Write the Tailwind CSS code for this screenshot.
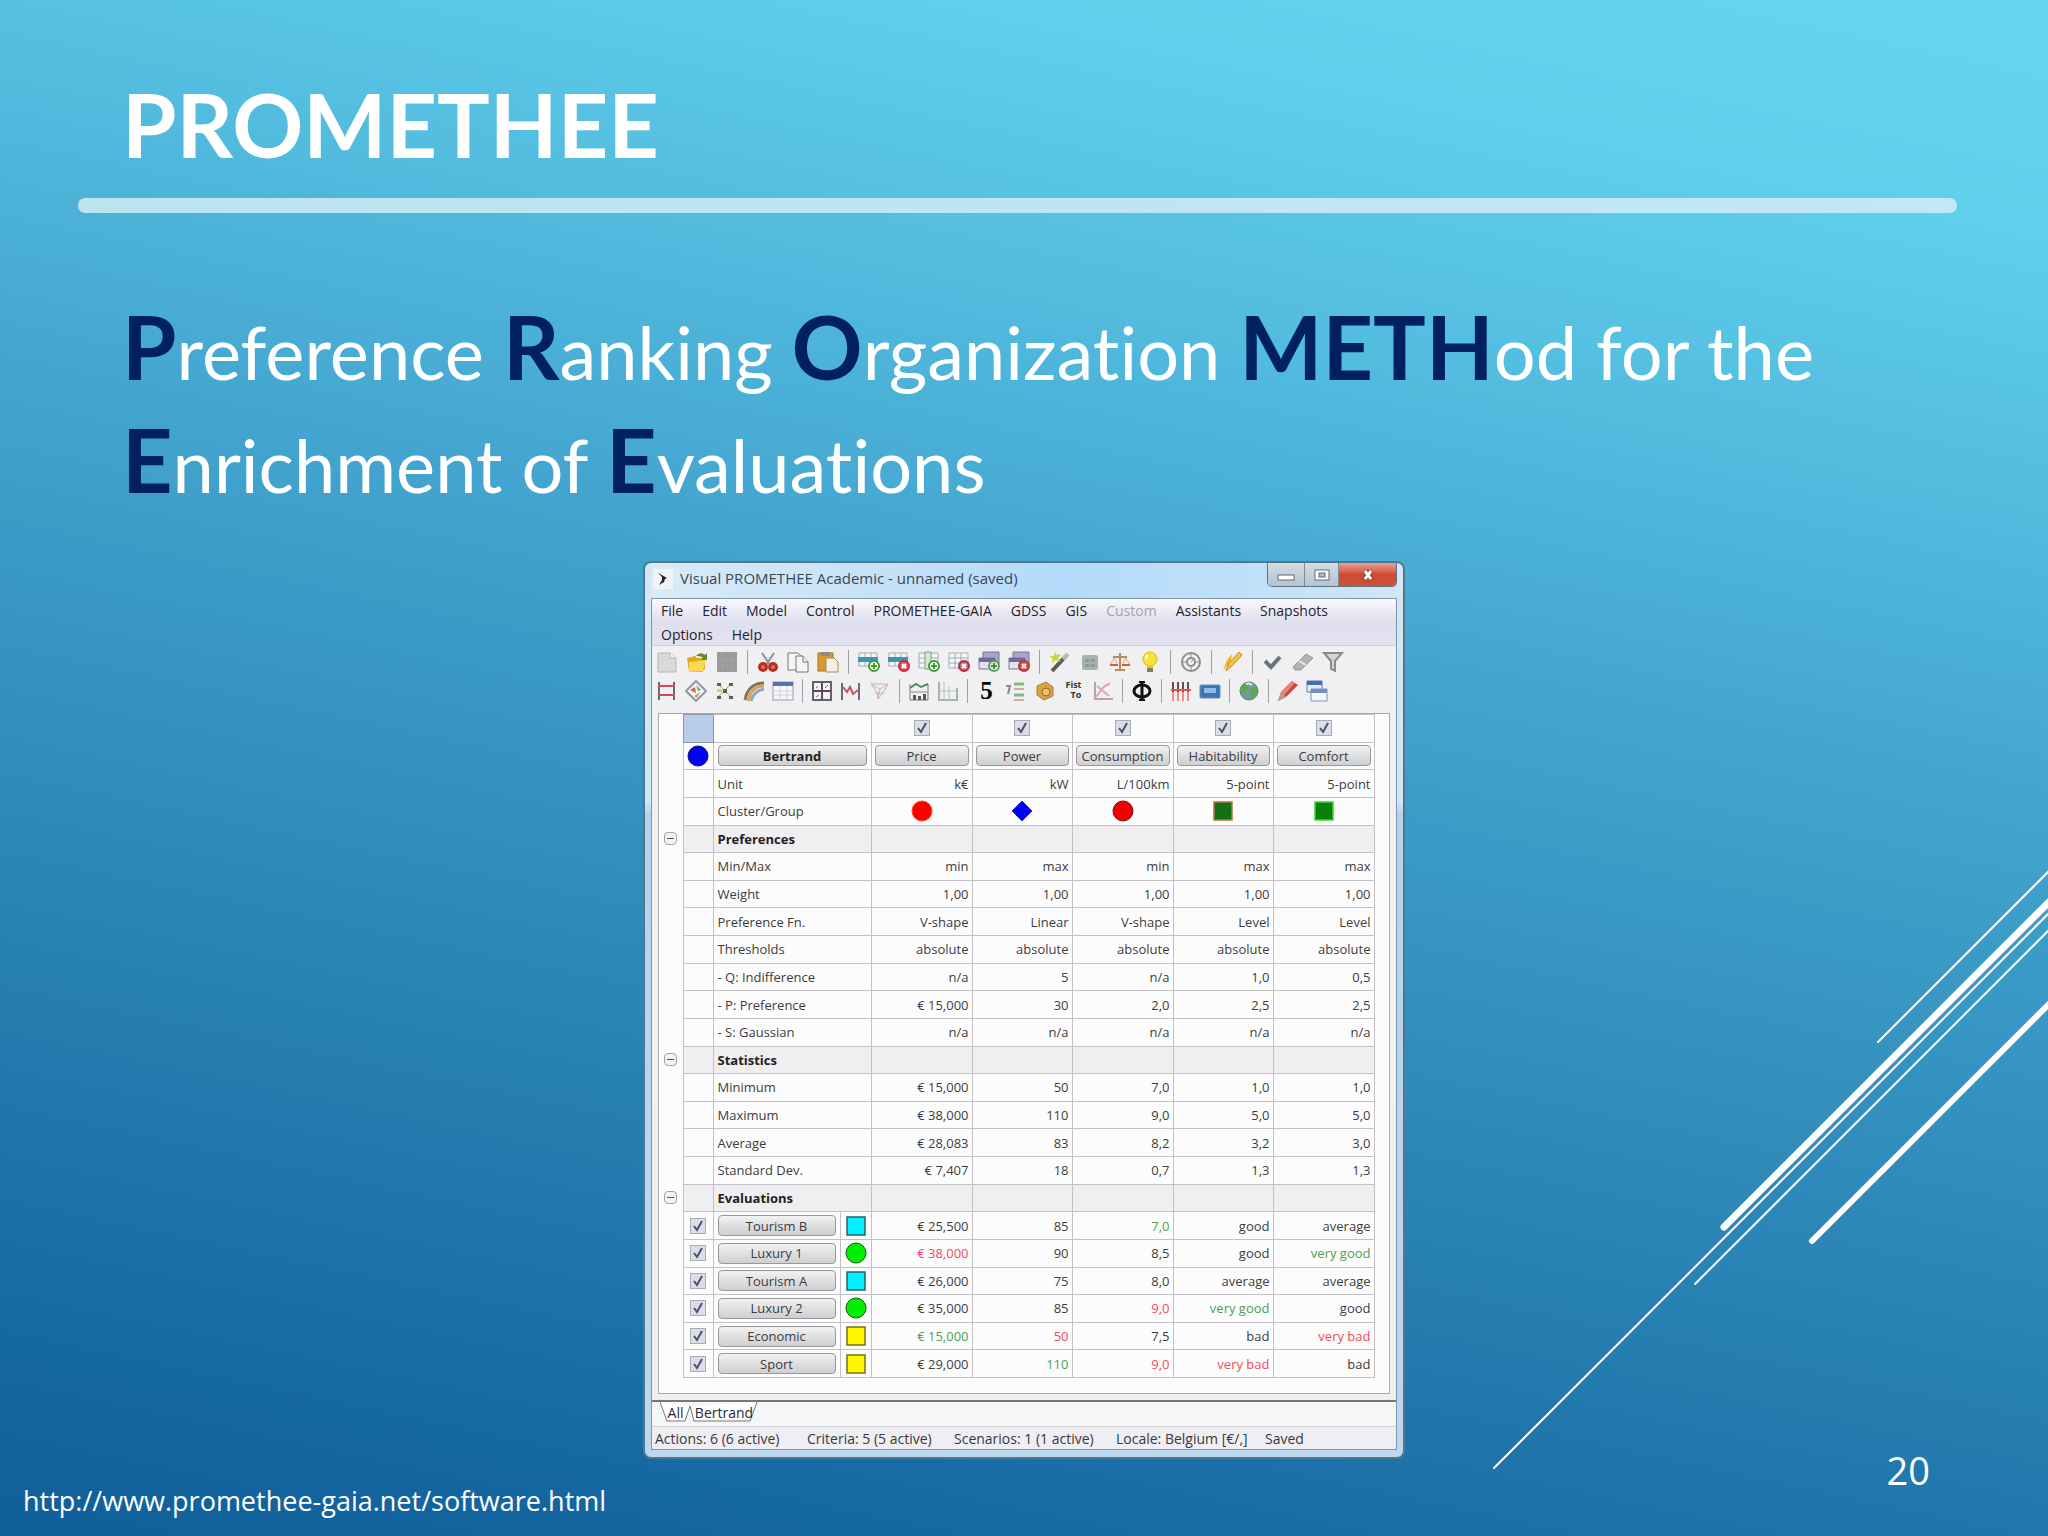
<!DOCTYPE html>
<html lang="en">
<head>
    <meta charset="UTF-8">
    <meta name="viewport" content="width=device-width, initial-scale=1.0">
    <title>PROMETHEE</title>
    <script src="https://cdn.jsdelivr.net/npm/@tailwindcss/browser@4"></script>
</head>
<body class="relative min-h-screen overflow-x-hidden bg-[linear-gradient(192deg,#66d6f0_0%,#60cfeb_12%,#52bbde_26%,#44a6d0_40%,#3492c0_56%,#2279ad_76%,#1668a2_90%,#0f5f99_100%)] text-white font-['Lato',sans-serif]">

    <!-- Diagonal strokes -->
    <svg class="absolute right-0 top-[866px] w-[560px] h-[610px]" viewBox="1488 866 560 610" fill="none" stroke="#fff" stroke-linecap="round" aria-hidden="true">
        <path d="M1878 1042L2050 870M1494 1468L2050 912M1695 1284L2050 929" stroke-width="2"/>
        <path d="M1724 1227L2050 901" stroke-width="7"/>
        <path d="M1812 1241L2050 1003" stroke-width="6"/>
    </svg>

    <div class="flex min-h-screen flex-col">
        <!-- Header -->
        <header class="pt-[80px]">
            <h1 class="px-[122px] text-[88px] leading-none font-bold">PROMETHEE</h1>
            <div class="mt-[30px] ml-[78px] mr-[91px] h-[15px] rounded-[7px] bg-[#d9eef6]/80"></div>
        </header>

        <main class="px-[122px]">
            <p class="mt-[82px] text-[74px] leading-[113px] [font-variant-ligatures:none] [&>b]:text-[88px] [&>b]:leading-none [&>b]:font-bold [&>b]:text-[#00205f]"><b>P</b>reference <b>R</b>anking <b>O</b>rganization <b>METH</b>od for the <b>E</b>nrichment of <b>E</b>valuations</p>

            <!-- Application window -->
            <section class="mx-auto mt-10 w-full max-w-[762px] rounded-lg border-2 border-[#4f7890] bg-[linear-gradient(180deg,#d3e7f4_0,#cfe6f5_240px,#b3d3ee_250px,#bcd8ee_100%)] px-[6px] pb-[7px] font-['Open_Sans',sans-serif] text-[#2a2a35]">
                <div class="flex h-[35px] items-start justify-between bg-[linear-gradient(90deg,#d9ebf6_0%,#c3e0f7_35%,#b3dafa_55%,#c0e0f8_80%,#cfe6f5_100%)]">
                    <div class="flex h-[31px] items-center gap-[7px] pl-[2px] text-[15px] text-[#3a4654]">
                        <svg class="size-5" viewBox="0 0 20 20" fill="#222"><rect width="20" height="20" fill="#eef4f8"/><path d="M5 4l9 5-2 1-1 3-5 3 3-5 0-3z"/></svg>
                        <span>Visual PROMETHEE Academic - unnamed (saved)</span>
                    </div>
                    <div class="flex h-[24px] w-[130px] overflow-hidden rounded-b-[5px] border border-t-0 border-[#5f7282]">
                        <button aria-label="Minimize" class="flex w-[37px] items-center justify-center border-r border-[#7c8c99] bg-linear-to-b from-[#d5dde4] to-[#b4c3d0]"><svg class="w-[18px] h-4" viewBox="0 0 18 16"><rect x="1" y="8" width="16" height="5" fill="#fff" stroke="#5d6b78"/></svg></button>
                        <button aria-label="Maximize" class="flex w-[34px] items-center justify-center border-r border-[#7c8c99] bg-linear-to-b from-[#d5dde4] to-[#b4c3d0]"><svg class="w-[18px] h-4" viewBox="0 0 18 16"><rect x="2" y="3" width="14" height="10" fill="#fff" stroke="#5d6b78"/><rect x="6" y="6" width="6" height="4" fill="#aebccb" stroke="#5d6b78"/></svg></button>
                        <button aria-label="Close" class="flex flex-1 items-center justify-center bg-linear-to-b from-[#e3a294] via-[#cf4a33] to-[#c8523c]"><svg class="size-4" viewBox="0 0 16 16"><path d="M5 4l6 8M11 4l-6 8" stroke="#6d3a34" stroke-width="5"/><path d="M5 4l6 8M11 4l-6 8" stroke="#fff" stroke-width="3"/></svg></button>
                    </div>
                </div>

                <div class="border border-[#7f97a8] bg-[#f0eff2]">
                    <!-- Menu -->
                    <nav class="flex h-[47px] flex-wrap content-start gap-x-[19px] border-b border-[#cfcfdb] bg-linear-to-b from-[#f8f8fc] via-[#e0dfee] to-[#e3e2f0] px-[9px] text-[14px] leading-6 text-[#23232e]">
                        <a href="#">File</a>
                        <a href="#">Edit</a>
                        <a href="#">Model</a>
                        <a href="#">Control</a>
                        <a href="#">PROMETHEE-GAIA</a>
                        <a href="#">GDSS</a>
                        <a href="#">GIS</a>
                        <a href="#" class="text-[#a3a3ad]">Custom</a>
                        <a href="#">Assistants</a>
                        <a href="#" class="mr-[40px]">Snapshots</a>
                        <a href="#">Options</a>
                        <a href="#">Help</a>
                    </nav>

                    <!-- Toolbar, first row -->
                    <div class="flex h-[30px] items-center pt-[2px] [&>button]:flex [&>button]:w-[30px] [&>button]:shrink-0 [&>button]:justify-center [&>i]:flex [&>i]:w-[11px] [&>i]:justify-center [&>i]:before:h-6 [&>i]:before:w-px [&>i]:before:bg-[#a0a0a4] [&_svg]:size-[22px]">
                        <button aria-label="New"><svg viewBox="0 0 22 22"><path d="M2 2h12l6 5v14H2z" fill="#d9d9d9" stroke="#b5b5b5"/><path d="M14 2v5h6" fill="#f5f5f5" stroke="#b5b5b5"/></svg></button>
                        <button aria-label="Open"><svg viewBox="0 0 22 22"><path d="M1 7l8-2 2 2h8v11l-3 3H3z" fill="#e0a81e"/><path d="M3 11l17-2-3 11-14 1z" fill="#fbd84f"/><path d="M10 5c3-4 7-3 9-1l2-2v7h-6l2-2c-2-2-4-2-7-2z" fill="#5c8f2c"/></svg></button>
                        <button aria-label="Save"><svg viewBox="0 0 22 22"><rect x="1" y="1" width="20" height="20" fill="#9a9a9a"/><path d="M5 1v8h12V1M6 21v-7h10v7" fill="none" stroke="#a6a6a6"/></svg></button>
                        <i></i>
                        <button aria-label="Cut"><svg viewBox="0 0 22 22" fill="none"><path d="M5 2l8 12M17 2L9 14" stroke="#8b8f98" stroke-width="2"/><circle cx="6" cy="16" r="3.500" fill="#d9745c" stroke="#b8301c" stroke-width="3"/><circle cx="16" cy="16" r="3.500" fill="#d9745c" stroke="#b8301c" stroke-width="3"/></svg></button>
                        <button aria-label="Copy"><svg viewBox="0 0 22 22" fill="#f5f5f5" stroke="#777"><path d="M1 2h10l3 3v14H1z"/><path d="M9 5h7l5 6v10H9z"/><path d="M16 5v6h5"/></svg></button>
                        <button aria-label="Paste"><svg viewBox="0 0 22 22"><rect x="1" y="2" width="15" height="18" fill="#d79a35" stroke="#a77422"/><rect x="4" y="1" width="9" height="4" fill="#8d8d8d"/><path d="M9 7h8l4 4v10H9z" fill="#f3f0e8" stroke="#a88c58"/></svg></button>
                        <i></i>
                        <button aria-label="Add action"><svg viewBox="0 0 22 22"><path d="M1 2h18v13H1zM7 2v13M13 2v13" fill="#f2f6f9" stroke="#a2adb6"/><path d="M0 6h20v5H0z" fill="#3f94b4"/><circle cx="16" cy="15" r="5" fill="#fff" stroke="#3d9d35" stroke-width="2"/><path d="M16 12v6M13 15h6" stroke="#3d9d35" stroke-width="2"/></svg></button>
                        <button aria-label="Delete action"><svg viewBox="0 0 22 22"><path d="M1 2h18v13H1zM7 2v13M13 2v13" fill="#f2f6f9" stroke="#a2adb6"/><path d="M0 6h20v5H0z" fill="#3f94b4"/><circle cx="16" cy="15" r="5" fill="#d9606a" stroke="#c42b3c" stroke-width="2"/><path d="M14 13l4 4M18 13l-4 4" stroke="#fff" stroke-width="2"/></svg></button>
                        <button aria-label="Add criterion"><svg viewBox="0 0 22 22"><path d="M1 2h19v15H1zM1 7h19M1 12h19" fill="#f2f6f9" stroke="#a2adb6"/><path d="M7 1h6v17H7z" fill="#d2ead6" stroke="#6ca77a"/><circle cx="16" cy="15" r="5" fill="#fff" stroke="#3d9d35" stroke-width="2"/><path d="M16 12v6M13 15h6" stroke="#3d9d35" stroke-width="2"/></svg></button>
                        <button aria-label="Delete criterion"><svg viewBox="0 0 22 22"><path d="M1 2h19v15H1zM1 7h19M1 12h19M7 2v15M13 2v15" fill="#f6f6f6" stroke="#a2adb6"/><circle cx="16" cy="15" r="5" fill="#cc6a74" stroke="#b02f40" stroke-width="2"/><path d="M14 13l4 4M18 13l-4 4" stroke="#fff" stroke-width="2"/></svg></button>
                        <button aria-label="Add scenario"><svg viewBox="0 0 22 22"><path d="M5 1h16v12H5z" fill="#a9a6c6" stroke="#77759c"/><path d="M1 7h16v11H1z" fill="#e4e3ee" stroke="#77759c"/><path d="M1 7h16v4H1z" fill="#6f6c9d"/><circle cx="16" cy="15" r="5" fill="#dfeadf" stroke="#5c9e5b" stroke-width="2"/><path d="M16 12v6M13 15h6" stroke="#4a8a49" stroke-width="2"/></svg></button>
                        <button aria-label="Delete scenario"><svg viewBox="0 0 22 22"><path d="M5 1h16v12H5z" fill="#a9a6c6" stroke="#77759c"/><path d="M1 7h16v11H1z" fill="#e4e3ee" stroke="#77759c"/><path d="M1 7h16v4H1z" fill="#6f6c9d"/><circle cx="16" cy="15" r="5" fill="#d65a5a" stroke="#c03030" stroke-width="2"/><path d="M14 13l4 4M18 13l-4 4" stroke="#fff" stroke-width="2"/></svg></button>
                        <i></i>
                        <button aria-label="Wizard"><svg viewBox="0 0 22 22"><path d="M3 20L17 5" stroke="#5b5b52" stroke-width="4"/><path d="M14 8l5-5" stroke="#b9b9ad" stroke-width="4"/><path d="M6 0l1 4 5-1-3 4 3 4-5-2-4 3 1-4-4-3h5z" fill="#cfd13c"/></svg></button>
                        <button aria-label="Data"><svg viewBox="0 0 22 22"><rect x="3" y="4" width="16" height="15" rx="2" fill="#a9b0b0"/><path d="M6 8h4v3H6zM12 8h4v3h-4zM6 13h4v3H6zM12 13h4v3h-4z" fill="#8f999b"/></svg></button>
                        <button aria-label="Balance"><svg viewBox="0 0 22 22" fill="none" stroke="#b98b5d" stroke-width="2"><path d="M11 2v16M4 6h14M6 19h10"/><path d="M1 14l4-7 4 7M13 14l4-7 4 7" stroke="#d8ab85" stroke-width="1"/><path d="M1 14h8M13 14h8" stroke="#d2622e"/></svg></button>
                        <button aria-label="Hints"><svg viewBox="0 0 22 22"><circle cx="11" cy="8" r="7" fill="#f7e23a" stroke="#d6ba1c"/><path d="M9 4c-2 1-2 3-2 4" stroke="#fffbd0" stroke-width="2" fill="none"/><path d="M8 14h6v3H8z" fill="#e0c534"/><path d="M8 17h6v4H8z" fill="#857f5c"/></svg></button>
                        <i></i>
                        <button aria-label="Settings"><svg viewBox="0 0 22 22" fill="none" stroke="#8d8d8d"><circle cx="11" cy="11" r="9" stroke-width="2"/><circle cx="11" cy="11" r="4" stroke-width="2"/><path d="M11 1v5M11 16v5M1 11h5M16 11h5M11 11l4-4"/></svg></button>
                        <i></i>
                        <button aria-label="Edit"><svg viewBox="0 0 22 22"><path d="M2 20L6 9l5-6-1 7z" fill="#eeb52b"/><path d="M5 20L8 12 18 1l3 3-10 11z" fill="#f2c637" stroke="#c98b1e"/></svg></button>
                        <i></i>
                        <button aria-label="Validate"><svg viewBox="0 0 22 22"><path d="M3 10l6 6 9-10" fill="none" stroke="#6d7478" stroke-width="4"/></svg></button>
                        <button aria-label="Erase"><svg viewBox="0 0 22 22"><path d="M1 16L14 3l7 4L9 19H3z" fill="#b2b2b2" stroke="#979797"/><path d="M7 10l7 4" stroke="#e6e6e6" stroke-width="2"/></svg></button>
                        <button aria-label="Filter"><svg viewBox="0 0 22 22"><path d="M2 2h18l-7 8v10l-4-2v-8z" fill="#d6d6d6" stroke="#8b8b8b" stroke-width="2"/></svg></button>
                    </div>

                    <!-- Toolbar, second row -->
                    <div class="flex h-[29px] items-center pt-px [&>button]:flex [&>button]:w-[29px] [&>button]:shrink-0 [&>button]:justify-center [&>i]:flex [&>i]:w-[10px] [&>i]:justify-center [&>i]:before:h-6 [&>i]:before:w-px [&>i]:before:bg-[#a0a0a4] [&_svg]:size-[22px]">
                        <button aria-label="Ranking"><svg viewBox="0 0 22 22"><path d="M3 2v18M18 2v18" stroke="#5b6f6b" stroke-width="2"/><path d="M2 6h17M2 15h17" stroke="#cf4a52" stroke-width="2"/></svg></button>
                        <button aria-label="Diamond"><svg viewBox="0 0 22 22"><path d="M11 1l10 10-10 10L1 11z" fill="#f4f4f4" stroke="#8e9aa5" stroke-width="2"/><path d="M11 5l5 5-3 1z" fill="#66a56c"/><path d="M5 10l5-3 1 6z" fill="#d45f6a"/><path d="M9 16l6-4-3 6z" fill="#d9a047"/></svg></button>
                        <button aria-label="Network"><svg viewBox="0 0 22 22"><path d="M4 4l13 13M17 4L4 17" stroke="#a9a07c"/><path d="M3 3h4v3H3zM15 3h4v3h-4zM9 9h4v4H9zM3 16h4v3H3zM15 16h4v3h-4z" fill="#5c5f4c"/><path d="M3 9h5v3H3z" fill="#cdd84e"/></svg></button>
                        <button aria-label="Rainbow"><svg viewBox="0 0 22 22" fill="none" stroke-width="3"><path d="M2 20C4 8 12 3 21 3" stroke="#847261"/><path d="M5 21C7 11 13 6 21 6" stroke="#d8a54a"/><path d="M8 21C10 14 15 10 21 9" stroke="#89a9c4"/></svg></button>
                        <button aria-label="Table"><svg viewBox="0 0 22 22"><rect x="1" y="2" width="20" height="18" fill="#f8f8fb" stroke="#8d9cb5"/><path d="M1 2h20v4H1z" fill="#5573ac"/><path d="M1 11h20M1 15h20M8 6v14M15 6v14" stroke="#ccd2de"/></svg></button>
                        <i></i>
                        <button aria-label="GAIA plane"><svg viewBox="0 0 22 22"><rect x="2" y="2" width="18" height="18" fill="#f4f4f4" stroke="#61636b" stroke-width="2"/><path d="M11 2v18M2 11h18" stroke="#61465e" stroke-width="2"/><path d="M5 8l2-2M14 8l3-3M5 17l3-2" stroke="#777"/></svg></button>
                        <button aria-label="Profile"><svg viewBox="0 0 22 22" fill="none"><path d="M2 3v17M19 3v17" stroke="#6c6c74" stroke-width="2"/><path d="M3 7l4 5 3-5 3 7 5-4" stroke="#c85162" stroke-width="2"/></svg></button>
                        <button aria-label="Web"><svg viewBox="0 0 22 22" fill="none" stroke="#d3a9a9"><path d="M2 4h17l-5 9-5 6-1-7z"/><path d="M2 4l9 5 8-5M11 9l-2 10M6 13h9" stroke="#c9b9ae"/></svg></button>
                        <i></i>
                        <button aria-label="Walking weights"><svg viewBox="0 0 22 22"><path d="M2 4v16h18V4" fill="none" stroke="#777d7d"/><path d="M2 8l6-4 5 3 7-3" stroke="#4b8b66" fill="none" stroke-width="2"/><path d="M2 12h18" stroke="#888"/><path d="M5 15h3v5H5zM10 16h3v4h-3zM15 14h3v6h-3z" fill="#55585c"/></svg></button>
                        <button aria-label="Stability"><svg viewBox="0 0 22 22" fill="none"><path d="M2 2v18h18V8" stroke="#a8b1ae" stroke-width="2"/><path d="M7 2v18M12 6v14M2 11h18" stroke="#a6cbb1"/></svg></button>
                        <i></i>
                        <button aria-label="Five" class="font-['Liberation_Serif',serif] text-[25px] leading-6 font-bold text-black">5</button>
                        <button aria-label="List"><svg viewBox="0 0 22 22"><path d="M1 6h4l-2 8" fill="none" stroke="#888" stroke-width="2"/><path d="M9 4h10M9 15h10" stroke="#7bbd7f" stroke-width="3"/><path d="M9 9h10M9 20h10" stroke="#dda5a0" stroke-width="2"/></svg></button>
                        <button aria-label="Coins"><svg viewBox="0 0 22 22"><path d="M3 6l9-4 7 5v9l-9 4-7-5z" fill="#d9a24a" stroke="#b37a2d"/><circle cx="12" cy="12" r="4" fill="#e9c06c" stroke="#96632a"/></svg></button>
                        <button aria-label="First to" class="h-[22px] text-[9px] leading-[10px] font-bold text-[#333]">Fist<br>&nbsp;&nbsp;To</button>
                        <button aria-label="Chart"><svg viewBox="0 0 22 22" fill="none"><path d="M3 2v17h18" stroke="#aaa" stroke-width="2"/><path d="M3 17C8 15 10 4 18 4M5 6l12 10" stroke="#e2a5ac" stroke-width="2"/></svg></button>
                        <i></i>
                        <button aria-label="Phi"><svg viewBox="0 0 22 22" fill="none" stroke="#111"><ellipse cx="11" cy="11" rx="8" ry="6" stroke-width="3"/><path d="M11 1v20" stroke-width="3"/><path d="M8 2h6M8 20h6" stroke-width="2"/></svg></button>
                        <i></i>
                        <button aria-label="Bars"><svg viewBox="0 0 22 22"><path d="M3 2v18M8 2v18M13 2v18M18 2v18" stroke="#6c4a4a" stroke-width="2"/><path d="M1 10h20" stroke="#e05252" stroke-width="2"/><path d="M3 12v9M8 12v9M13 12v9M18 12v9" stroke="#ef8d85" stroke-width="2"/></svg></button>
                        <button aria-label="Screen"><svg viewBox="0 0 22 22"><rect x="1" y="5" width="20" height="13" rx="1" fill="#3b76b4" stroke="#6a8eb5"/><path d="M5 8h12v5H5z" fill="#8fb9e0"/></svg></button>
                        <i></i>
                        <button aria-label="Globe"><svg viewBox="0 0 22 22"><circle cx="11" cy="11" r="9" fill="#6d9f91" stroke="#5b7f78"/><path d="M5 5c4-3 6 0 5 3s-6 3-6 6c-3-3-2-7 1-9zM13 9l6-1c1 5-2 9-6 10z" fill="#5fa94c"/><path d="M8 4c3-1 5 0 6 1" stroke="#dcefe2" stroke-width="2" fill="none"/></svg></button>
                        <i></i>
                        <button aria-label="Pencil"><svg viewBox="0 0 22 22"><path d="M1 21l3-9L15 1l6 4L9 17z" fill="#cc4640"/><path d="M4 12L15 1l3 2L7 15z" fill="#e9837a"/><path d="M1 21l3-9 5 5z" fill="#b99b94"/></svg></button>
                        <button aria-label="Windows"><svg viewBox="0 0 22 22"><path d="M1 1h15v11H1z" fill="#e8eef8" stroke="#5877b3"/><path d="M1 1h15v4H1z" fill="#476fb5"/><path d="M5 9h16v12H5z" fill="#f3f6fb" stroke="#7d94bd"/><path d="M5 9h16v4H5z" fill="#6f8fc6"/></svg></button>
                    </div>

                    <!-- Grid -->
                    <div class="mx-[6px] mt-[8px] border border-[#a9a9ad] bg-[#fdfcfd] pb-[15px]">
                        <table class="h-[664px] w-[715px] max-w-full table-fixed border-collapse text-[13px] leading-4 text-[#3c3c3c]">
                            <colgroup>
                                <col class="w-[24px]"><col class="w-[30px]"><col class="w-[127px]"><col class="w-[31px]">
                                <col class="w-[101px]"><col class="w-[100px]"><col class="w-[101px]"><col class="w-[100px]"><col class="w-[101px]">
                            </colgroup>
                            <tbody id="grid" class="[&>tr]:h-[27px]"></tbody>
                        </table>
                    </div>

                    <!-- Sheet tabs -->
                    <div class="mt-[6px] flex h-[26px] items-start border-t-2 border-[#77777b] bg-[#f6f5f8] text-[14px] leading-[19px]">
                        <button class="relative ml-[8px] h-[20px] w-[31px]">
                            <svg class="absolute inset-0 h-[20px] w-[31px]" viewBox="0 0 31 20" fill="#fff" stroke="#77777b"><path d="M0 0l7 19h18l5-15"/></svg>
                            <span class="relative">All</span>
                        </button>
                        <button class="relative -ml-px h-[20px] w-[68px]">
                            <svg class="absolute inset-0 h-[20px] w-[68px]" viewBox="0 0 68 20" fill="#fdfdfd" stroke="#77777b"><path d="M0 4l4 15h56l7-19"/></svg>
                            <span class="relative">Bertrand</span>
                        </button>
                    </div>

                    <!-- Status bar -->
                    <footer class="flex h-[23px] items-center border-t border-[#cfced2] bg-[#efeef2] pl-[3px] text-[14px] text-[#38383e]">
                        <span class="w-[152px]">Actions: 6 (6 active)</span>
                        <span class="w-[147px]">Criteria: 5 (5 active)</span>
                        <span class="w-[162px]">Scenarios: 1 (1 active)</span>
                        <span class="w-[149px]">Locale: Belgium [€/,]</span>
                        <span>Saved</span>
                    </footer>
                </div>
            </section>
        </main>
    </div>

    <!-- Source and slide number -->
    <a href="http://www.promethee-gaia.net/software.html" class="absolute bottom-[17px] left-[23px] text-[27px] leading-9 font-['Open_Sans',sans-serif]">http://www.promethee-gaia.net/software.html</a>
    <span class="absolute right-[118px] bottom-[44px] text-[38px] leading-[44px] font-['Open_Sans',sans-serif]">20</span>

    <script>
        const edge = 'border border-[#c3c1c5]';
        const check = (label) => `<label class="flex justify-center"><input type="checkbox" checked aria-label="${label}" class="peer sr-only"><span class="flex size-4 items-center justify-center border border-[#a9abb5] bg-[#dcdde6]"><svg class="size-3" viewBox="0 0 12 12" fill="none" stroke="#4b4f70" stroke-width="2"><path d="M2 6l3 4 5-9"/></svg></span></label>`;
        const button = (text, extra = '') => `<button class="block h-[21px] w-full rounded-[4px] border border-[#98989c] bg-linear-to-b from-[#f3f3f4] via-[#dfdfe1] to-[#d0d0d3] text-center leading-[18px] ${extra}">${text}</button>`;
        const shapes = {
            circle: (fill, line) => `<circle cx="11" cy="11" r="10" fill="${fill}" stroke="${line}"/>`,
            square: (fill, line) => `<rect x="2" y="2" width="18" height="18" fill="${fill}" stroke="${line}" stroke-width="1.500"/>`,
            diamond: (fill, line) => `<path d="M11 1l10 10-10 10L1 11z" fill="${fill}" stroke="${line}"/>`,
        };
        const shape = (name, fill, line) => `<svg class="mx-auto block size-[22px]" viewBox="0 0 22 22">${shapes[name](fill, line)}</svg>`;
        const colors = { r: 'text-[#f04a5c]', g: 'text-[#4b9f55]' };

        const value = (text) => {
            const [v, c] = text.split('|');
            return `<td class="${edge} pr-[3px] text-right whitespace-nowrap ${colors[c] || ''}">${v}</td>`;
        };
        const row = (label, values) => `<tr><td></td><td class="${edge}"></td><th colspan="2" scope="row" class="${edge} pl-[4px] text-left font-normal whitespace-nowrap">${label}</th>${values.map(value).join('')}</tr>`;
        const group = (label) => `<tr class="bg-[#efeef0]"><td class="bg-[#fdfcfd]"><button aria-label="Toggle ${label}" class="mx-auto flex size-[13px] items-center justify-center rounded-[4px] border border-[#a3a3a3] bg-[#f2f2f2] before:h-px before:w-[7px] before:bg-[#555]"></button></td><td class="${edge}"></td><th colspan="2" scope="row" class="${edge} pl-[4px] text-left font-bold text-[#222]">${label}</th>${`<td class="${edge}"></td>`.repeat(5)}</tr>`;
        const action = (label, icon, values) => `<tr><td></td><td class="${edge}">${check(label)}</td><th scope="row" class="${edge} pl-[4px] pr-[4px] font-normal">${button(label)}</th><td class="${edge}">${icon}</td>${values.map(value).join('')}</tr>`;

        const criteria = ['Price', 'Power', 'Consumption', 'Habitability', 'Comfort'];
        const clusters = [
            shape('circle', '#ff0000', '#ff4a20'), shape('diamond', '#0000f5', '#2a2ae0'), shape('circle', '#f20000', '#7a1010'),
            shape('square', '#147014', '#b5763c'), shape('square', '#087f08', '#39d92c'),
        ];
        const cyan = shape('square', '#00f0ff', '#23636b');
        const green = shape('circle', '#00ee00', '#145c14');
        const yellow = shape('square', '#fff600', '#77701a');

        document.getElementById('grid').innerHTML = [
            `<tr><td></td><td class="border border-[#8d97a8] bg-[#b9cdea]"></td><td colspan="2" class="${edge}"></td>${criteria.map(c => `<td class="${edge}">${check(c)}</td>`).join('')}</tr>`,
            `<tr><td></td><td class="${edge}">${shape('circle', '#0000fa', '#101070')}</td><th colspan="2" class="${edge} px-[4px]">${button('Bertrand', 'font-bold text-[#222]')}</th>${criteria.map(c => `<th scope="col" class="${edge} px-[3px] font-normal">${button(c)}</th>`).join('')}</tr>`,
            row('Unit', ['k€', 'kW', 'L/100km', '5-point', '5-point']),
            `<tr><td></td><td class="${edge}"></td><th colspan="2" scope="row" class="${edge} pl-[4px] text-left font-normal">Cluster/Group</th>${clusters.map(c => `<td class="${edge}">${c}</td>`).join('')}</tr>`,
            group('Preferences'),
            row('Min/Max', ['min', 'max', 'min', 'max', 'max']),
            row('Weight', ['1,00', '1,00', '1,00', '1,00', '1,00']),
            row('Preference Fn.', ['V-shape', 'Linear', 'V-shape', 'Level', 'Level']),
            row('Thresholds', ['absolute', 'absolute', 'absolute', 'absolute', 'absolute']),
            row('- Q: Indifference', ['n/a', '5', 'n/a', '1,0', '0,5']),
            row('- P: Preference', ['€ 15,000', '30', '2,0', '2,5', '2,5']),
            row('- S: Gaussian', ['n/a', 'n/a', 'n/a', 'n/a', 'n/a']),
            group('Statistics'),
            row('Minimum', ['€ 15,000', '50', '7,0', '1,0', '1,0']),
            row('Maximum', ['€ 38,000', '110', '9,0', '5,0', '5,0']),
            row('Average', ['€ 28,083', '83', '8,2', '3,2', '3,0']),
            row('Standard Dev.', ['€ 7,407', '18', '0,7', '1,3', '1,3']),
            group('Evaluations'),
            action('Tourism B', cyan, ['€ 25,500', '85', '7,0|g', 'good', 'average']),
            action('Luxury 1', green, ['€ 38,000|r', '90', '8,5', 'good', 'very good|g']),
            action('Tourism A', cyan, ['€ 26,000', '75', '8,0', 'average', 'average']),
            action('Luxury 2', green, ['€ 35,000', '85', '9,0|r', 'very good|g', 'good']),
            action('Economic', yellow, ['€ 15,000|g', '50|r', '7,5', 'bad', 'very bad|r']),
            action('Sport', yellow, ['€ 29,000', '110|g', '9,0|r', 'very bad|r', 'bad']),
        ].join('');
    </script>
</body>
</html>
